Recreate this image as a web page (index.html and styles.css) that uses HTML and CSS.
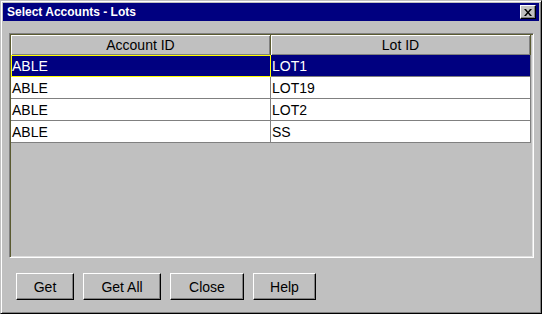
FILE: index.html
```html
<!DOCTYPE html>
<html lang="en">
<head>
    <meta charset="UTF-8">
    <title>Select Accounts - Lots</title>
    <link rel="stylesheet" href="styles.css">
</head>
<body>

    <div class="dialog">
        <!-- barra de titulo -->
        <div class="titlebar">
            <span class="title">Select Accounts - Lots</span>
            <button class="close-btn" aria-label="Close">
                <svg width="8" height="7" viewBox="0 0 8 7">
                    <path d="M0 0h2l2 2.5L6 0h2L5 3.5 8 7H6L4 4.5 2 7H0l3-3.5z" fill="#000"/>
                </svg>
            </button>
        </div>

        <!-- grade de contas -->
        <div class="grid-frame">
            <div class="grid">
                <div class="head">Account ID</div>
                <div class="head">Lot ID</div>

                <div class="cell sel focus">ABLE</div>
                <div class="cell sel">LOT1</div>

                <div class="cell">ABLE</div>
                <div class="cell">LOT19</div>

                <div class="cell">ABLE</div>
                <div class="cell">LOT2</div>

                <div class="cell">ABLE</div>
                <div class="cell">SS</div>
            </div>
        </div>

        <div class="buttons">
            <button class="btn btn-get">Get</button>
            <button class="btn btn-getall">Get All</button>
            <button class="btn btn-close">Close</button>
            <button class="btn btn-help">Help</button>
        </div>
    </div>

</body>
</html>
```

FILE: styles.css
```css
body {
    margin: 0;
    font-family: "Liberation Sans", Arial, sans-serif;
    background-color: #c0c0c0;
}

.dialog {
    width: 542px;
    height: 314px;
    box-sizing: border-box;
    background-color: #c0c0c0;
    border: 1px solid;
    border-color: #c0c0c0 #000 #000 #c0c0c0;
    box-shadow: inset 1px 1px #fff, inset -1px -1px #808080;
    padding: 2px;
    display: flex;
    flex-direction: column;
}

/* barra de titulo */
.titlebar {
    height: 18px;
    background-color: #000080;
    color: #fff;
    display: flex;
    align-items: center;
    justify-content: space-between;
    padding: 0 3px 0 4px;
}

.title {
    font-weight: bold;
    font-size: 12px;
}

.close-btn {
    width: 16px;
    height: 14px;
    padding: 0;
    background-color: #c0c0c0;
    border: 1px solid;
    border-color: #fff #000 #000 #fff;
    box-shadow: inset -1px -1px #808080;
    display: flex;
    align-items: center;
    justify-content: center;
}

/* grade */
.grid-frame {
    margin: 12px 5px 0 6px;
    height: 225px;
    box-sizing: border-box;
    border: 1px solid;
    border-color: #808080 #fff #fff #808080;
    box-shadow: inset 1px 1px #5a5a30, inset -1px -1px #dfdfdf;
    padding: 1px;
}

.grid {
    display: grid;
    grid-template-columns: 260px 260px;
    font-size: 14px;
}

.head {
    height: 20px;
    box-sizing: border-box;
    background-color: #c0c0c0;
    box-shadow: inset 1px 1px #fff, inset -1px -1px #808080;
    border-right: 1px solid #5a5a30;
    display: flex;
    align-items: center;
    justify-content: center;
    color: #000;
}

.cell {
    height: 22px;
    box-sizing: border-box;
    background-color: #fff;
    border-right: 1px solid #808080;
    border-bottom: 1px solid #808080;
    padding-left: 1px;
    display: flex;
    align-items: center;
    color: #000;
}

.sel {
    background-color: #000080;
    color: #fff;
}

.focus {
    border-color: #ffff00;
    box-shadow: inset 1px 1px #ffff00;
}

/* botoes */
.buttons {
    display: flex;
    gap: 9px;
    margin-top: 15px;
    padding-left: 13px;
}

.btn {
    height: 27px;
    box-sizing: border-box;
    background-color: #c0c0c0;
    border: 1px solid;
    border-color: #fff #000 #000 #fff;
    box-shadow: inset -1px -1px #808080;
    font-family: "Liberation Sans", Arial, sans-serif;
    font-size: 14px;
    color: #000;
    padding: 0;
}

.btn-get { width: 58px; }
.btn-getall { width: 78px; }
.btn-close { width: 74px; }
.btn-help { width: 63px; }
```
